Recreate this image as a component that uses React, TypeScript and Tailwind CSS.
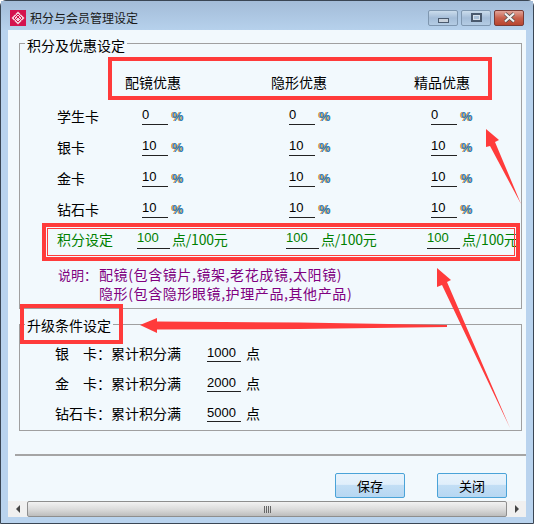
const cjk = { fontFamily: '"Noto Sans CJK SC", sans-serif' };

function Field({ value, unit, green }: { value: string; unit: string; green?: boolean }) {
  return (
    <div className="flex items-end">
      <span
        className={`border-b border-[#222] pb-[1px] font-['Liberation_Sans'] text-[13px] leading-[17px] ${
          green ? "w-[33px] pb-[2px] text-[#008000]" : "w-[26px] text-black"
        }`}
      >
        {value}
      </span>
      {green ? (
        <span className="ml-[2px] text-[14px] leading-[20px] tracking-[-0.2px] text-[#008000]">{unit}</span>
      ) : (
        <span className="ml-[4px] font-['Liberation_Sans'] text-[13px] font-bold leading-[17px] text-[#2f7fb8] [text-shadow:-1px_0_0_#d9902f]">
          {unit}
        </span>
      )}
    </div>
  );
}

function PercentRow({ label, value }: { label: string; value: string }) {
  return (
    <div className="grid h-[31px] grid-cols-[85px_147px_142px_1fr] items-center pl-[37px]">
      <span className="text-[14px] leading-none text-black">{label}</span>
      <Field value={value} unit="%" />
      <Field value={value} unit="%" />
      <Field value={value} unit="%" />
    </div>
  );
}

function UpgradeRow({ label, gap, value }: { label: string; gap?: boolean; value: string }) {
  return (
    <div className="flex h-[30px] items-center pl-[35px] text-[14px] text-black">
      <span className={`w-[56px] ${gap ? "flex justify-between" : ""}`}>
        {gap ? (
          <>
            <span>{label[0]}</span>
            <span className="w-[28px]">{label[1]}：</span>
          </>
        ) : (
          `${label}：`
        )}
      </span>
      <span className="w-[96px]">累计积分满</span>
      <span className="w-[34px] border-b border-[#222] font-['Liberation_Sans'] text-[13px] leading-[17px]">{value}</span>
      <span className="ml-[5px]">点</span>
    </div>
  );
}

function CaptionButton({ kind }: { kind: "min" | "max" | "close" }) {
  const base =
    kind === "close"
      ? "w-[30px] bg-gradient-to-b from-[#e0a499] via-[#c8604c] to-[#b8452f] border-[#7a3a34]"
      : "w-[30px] bg-gradient-to-b from-[#cbdcec] via-[#a4bdd8] to-[#b4cce4] border-[#7f97b0]";
  return (
    <div className={`flex h-[16px] items-center justify-center rounded-[2px] border ${base}`}>
      {kind === "min" && <div className="mt-[5px] h-[5px] w-[11px] border border-[#4a5a6e] bg-[#c9d2dc]" />}
      {kind === "max" && (
        <div className="flex h-[9px] w-[11px] items-center justify-center border-2 border-[#4a5a6e] bg-[#d7e2ec]">
          <div className="h-[3px] w-[5px] bg-[#a9c0d8]" />
        </div>
      )}
      {kind === "close" && (
        <svg width="13" height="11" viewBox="0 0 13 11">
          <path d="M2 1.5 L11 9.5 M11 1.5 L2 9.5" stroke="#4a4a4a" strokeWidth="3.6" />
          <path d="M2 1.5 L11 9.5 M11 1.5 L2 9.5" stroke="#f2f2f2" strokeWidth="2.2" />
        </svg>
      )}
    </div>
  );
}

function Logo() {
  return (
    <svg width="16" height="16" viewBox="0 0 16 16">
      <rect width="16" height="16" fill="#d4134f" />
      <path d="M8 1.5 L14.5 8 L8 14.5 L1.5 8 Z" fill="#f5d5de" />
      <path d="M8 4 L12 8 L8 12 L4 8 Z M5.5 4.5 L11.5 10.5 M10.5 4.5 L4.5 10.5" fill="none" stroke="#d4134f" strokeWidth="1" />
    </svg>
  );
}

function ActionButton({ label }: { label: string }) {
  return (
    <div className="flex h-[25px] w-[70px] items-center justify-center rounded-[2px] border border-[#4aa3d8] bg-[linear-gradient(#e8f3fc_0%,#e0effb_45%,#c2def5_50%,#b6d7f2_100%)] text-[13px] text-black">
      {label}
    </div>
  );
}

export default function App() {
  return (
    <div className="relative h-[525px] w-[535px] overflow-hidden bg-white" style={cjk}>
      <div className="flex h-[524px] w-[534px] flex-col rounded-t-[6px] border border-[#3a4654] bg-[#b9d3ee]">
        <div className="flex h-[29px] shrink-0 items-center bg-gradient-to-b from-[#a3bcd8] to-[#b6d1ec] pl-[9px] pr-[9px] pt-[4px]">
          <Logo />
          <span className="ml-[4px] text-[12px] text-[#1a1a1a]">积分与会员管理设定</span>
          <div className="ml-auto flex gap-[3px]">
            <CaptionButton kind="min" />
            <CaptionButton kind="max" />
            <CaptionButton kind="close" />
          </div>
        </div>

        <div className="mx-[7px] flex min-h-0 flex-1 flex-col bg-[#f2f9fd]">
          <div className="relative ml-[11px] mt-[13px] h-[266px] w-[503px] shrink-0 border border-[#a0a0a0]">
            <span className="absolute left-[5px] top-[-9px] bg-[#f2f9fd] px-[2px] text-[14px] leading-[20px] text-black">
              积分及优惠设定
            </span>
            <div className="grid h-[45px] grid-cols-[146px_143px_1fr] items-end pl-[105px] text-[14px] leading-none text-black">
              <span>配镜优惠</span>
              <span>隐形优惠</span>
              <span>精品优惠</span>
            </div>
            <div className="mt-[11px]">
              <PercentRow label="学生卡" value="0" />
              <PercentRow label="银卡" value="10" />
              <PercentRow label="金卡" value="10" />
              <PercentRow label="钻石卡" value="10" />
            </div>
            <div className="mt-[1px] grid h-[28px] grid-cols-[80px_149px_141px_1fr] items-center pl-[37px] text-[14px] text-[#008000]">
              <span className="leading-none">积分设定</span>
              <Field green value="100" unit="点/100元" />
              <Field green value="100" unit="点/100元" />
              <Field green value="100" unit="点/100元" />
            </div>
            <div className="mt-[12px] pl-[38px] text-[14px] leading-[19px] tracking-[0.6px] text-[#800080]">
              <div className="flex">
                <span className="w-[41px] shrink-0 text-[13px] tracking-normal">说明：</span>
                <span>配镜(包含镜片,镜架,老花成镜,太阳镜)</span>
              </div>
              <div className="pl-[41px]">隐形(包含隐形眼镜,护理产品,其他产品)</div>
            </div>
          </div>

          <div className="relative ml-[11px] mt-[15px] h-[107px] w-[503px] shrink-0 border border-[#a0a0a0] pt-[13px]">
            <span className="absolute left-[5px] top-[-10px] bg-[#f2f9fd] px-[2px] text-[14px] leading-[20px] text-black">
              升级条件设定
            </span>
            <UpgradeRow label="银卡" gap value="1000" />
            <UpgradeRow label="金卡" gap value="2000" />
            <UpgradeRow label="钻石卡" value="5000" />
          </div>

          <div className="ml-[7px] mt-[23px] h-[2px] shrink-0 bg-[#a5a5a5]" />

          <div className="mt-[17px] flex shrink-0 justify-end gap-[32px] pr-[19px]">
            <ActionButton label="保存" />
            <ActionButton label="关闭" />
          </div>

          <div className="mt-[3px] flex h-[16px] shrink-0 items-center bg-[#f0f0f0]">
            <div className="flex w-[19px] justify-center">
              <div className="h-0 w-0 border-y-[4px] border-r-[4px] border-y-transparent border-r-[#444]" />
            </div>
            <div className="flex h-full flex-1 items-center justify-center rounded-[2px] border border-[#8e8e8e] bg-gradient-to-b from-[#f2f2f2] via-[#dcdcdc] to-[#bdbdbd]">
              <div className="flex gap-[1px]">
                <div className="h-[7px] w-[1px] bg-[#666]" />
                <div className="h-[7px] w-[1px] bg-[#666]" />
                <div className="h-[7px] w-[1px] bg-[#666]" />
                <div className="h-[7px] w-[1px] bg-[#666]" />
              </div>
            </div>
            <div className="flex w-[19px] justify-center">
              <div className="h-0 w-0 border-y-[4px] border-l-[4px] border-y-transparent border-l-[#444]" />
            </div>
          </div>
        </div>
        <div className="h-[6px] shrink-0" />
      </div>

      {/* Red annotations drawn over the screenshot */}
      <div className="absolute left-[108px] top-[57px] h-[43px] w-[384px] border-[4px] border-[#ff3b3b]" />
      <div className="absolute left-[42px] top-[223px] h-[38px] w-[478px] border-[4px] border-[#ff3b3b]" />
      <div className="absolute left-[47px] top-[228px] h-[28px] w-[468px] border border-[#ff3b3b]" />
      <div className="absolute left-[20px] top-[304px] h-[40px] w-[103px] border-[4px] border-[#ff3b3b]" />
      <svg className="pointer-events-none absolute left-0 top-0" width="535" height="525" viewBox="0 0 535 525">
        <polygon points="486,129 499,140 495,142 521,204 490,146 486,147" fill="#ff3b3b" />
        <polygon points="437,268 451,280 447,282 510,428 442,285 437,287" fill="#ff3b3b" />
        <polygon points="140,325 157,318 157,321.5 300,322.5 447,325 447,327 300,329 157,329.5 157,333" fill="#ff3b3b" />
      </svg>
    </div>
  );
}
